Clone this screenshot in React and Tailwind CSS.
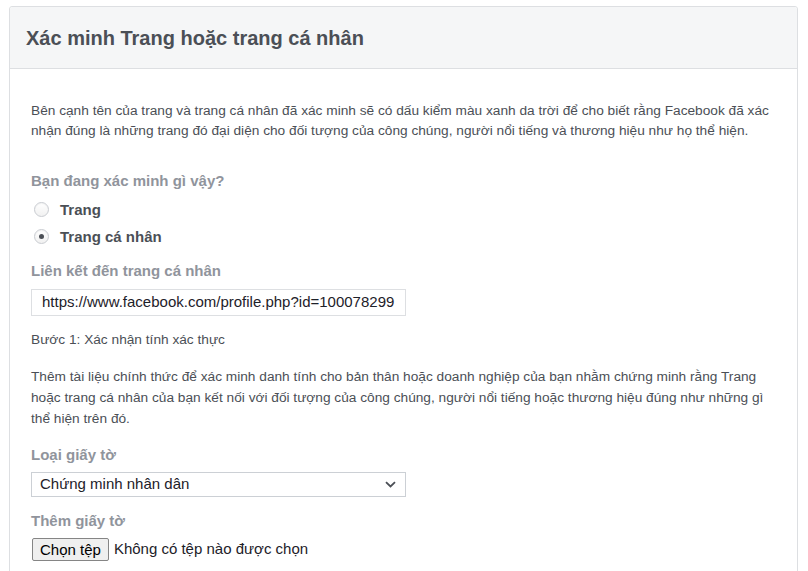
import React from "react";

function Radio({ checked, label }) {
  return (
    <div className="flex items-center h-[27px]">
      <span className="ml-[3px] w-[15px] h-[15px] rounded-full border border-[#c9ccd1] bg-gradient-to-b from-[#ffffff] to-[#f1f1f1] flex items-center justify-center shadow-[inset_0_1px_1px_rgba(0,0,0,0.05)]">
        {checked && <span className="w-[5px] h-[5px] rounded-full bg-[#4b4f56]" />}
      </span>
      <span className="ml-[11px] text-[15px] font-bold text-[#4b4f56] leading-[18px]">{label}</span>
    </div>
  );
}

export default function App() {
  return (
    <div
      className="w-[808px] h-[571px] overflow-hidden bg-white pt-[6px] pl-[9px] pr-[10px]"
      style={{ fontFamily: '"Liberation Sans", Arial, sans-serif' }}
    >
      <div className="border border-[#dddfe2] rounded-t-[3px] h-[600px]">
        <div className="h-[62px] bg-[#f5f6f7] border-b border-[#dddfe2] flex items-center pl-[16px] rounded-t-[3px]">
          <h1 className="text-[20px] font-bold text-[#4b4f56] leading-[24px] mt-[1px]">
            Xác minh Trang hoặc trang cá nhân
          </h1>
        </div>
        <div className="pl-[21px] pr-[20px] pt-[32px]">
          <p className="text-[13.7px] leading-[20px] text-[#4b4f56]">
            Bên cạnh tên của trang và trang cá nhân đã xác minh sẽ có dấu kiểm màu xanh da trời để cho biết rằng Facebook đã xác nhận đúng là những trang đó đại diện cho đối tượng của công chúng, người nổi tiếng và thương hiệu như họ thể hiện.
          </p>

          <div className="mt-[31px] text-[15px] font-bold text-[#90949c] leading-[18px]">
            Bạn đang xác minh gì vậy?
          </div>
          <div className="mt-[6px]">
            <Radio label="Trang" />
            <Radio checked label="Trang cá nhân" />
          </div>

          <div className="mt-[12px] text-[15px] font-bold text-[#90949c] leading-[18px]">
            Liên kết đến trang cá nhân
          </div>
          <div className="mt-[9px] w-[375px] h-[27px] border border-[#dddfe2] flex items-center pl-[10px] text-[15px] text-[#1d2129]">
            https://www.facebook.com/profile.php?id=100078299
          </div>

          <div className="mt-[14px] text-[13.7px] leading-[20px] text-[#4b4f56]">
            Bước 1: Xác nhận tính xác thực
          </div>

          <p className="mt-[16px] text-[13.7px] leading-[21px] text-[#4b4f56] pr-[10px]">
            Thêm tài liệu chính thức để xác minh danh tính cho bản thân hoặc doanh nghiệp của bạn nhằm chứng minh rằng Trang hoặc trang cá nhân của bạn kết nối với đối tượng của công chúng, người nổi tiếng hoặc thương hiệu đúng như những gì thể hiện trên đó.
          </p>

          <div className="mt-[17px] text-[15px] font-bold text-[#90949c] leading-[18px]">
            Loại giấy tờ
          </div>
          <div className="mt-[8px] w-[375px] h-[25px] border border-[#ccd0d5] flex items-center justify-between pl-[8px] pr-[9px] text-[15px] text-[#1d2129]">
            <span>Chứng minh nhân dân</span>
            <svg width="11" height="7" viewBox="0 0 11 7" fill="none">
              <path d="M1 1.2 L5.5 5.5 L10 1.2" stroke="#4b4f56" strokeWidth="1.8" />
            </svg>
          </div>

          <div className="mt-[15px] text-[15px] font-bold text-[#90949c] leading-[18px]">
            Thêm giấy tờ
          </div>
          <div className="mt-[8px] flex items-center">
            <button className="h-[23px] px-[7px] ml-[1px] border border-[#858585] rounded-[2px] bg-[#efefef] text-[15px] text-black leading-[16px]">
              Chọn tệp
            </button>
            <span className="ml-[5px] text-[15px] text-[#1d2129]">Không có tệp nào được chọn</span>
          </div>
        </div>
      </div>
    </div>
  );
}
